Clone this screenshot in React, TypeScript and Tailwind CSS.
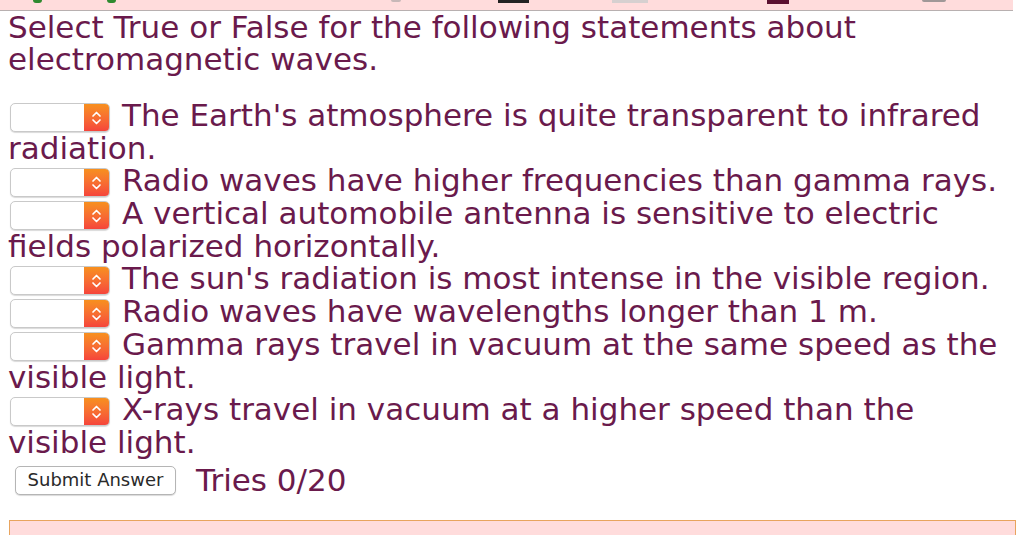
import React from "react";

const statements: string[][] = [
  ["The Earth's atmosphere is quite transparent to infrared", "radiation."],
  ["Radio waves have higher frequencies than gamma rays."],
  ["A vertical automobile antenna is sensitive to electric", "fields polarized horizontally."],
  ["The sun's radiation is most intense in the visible region."],
  ["Radio waves have wavelengths longer than 1 m."],
  ["Gamma rays travel in vacuum at the same speed as the", "visible light."],
  ["X-rays travel in vacuum at a higher speed than the", "visible light."],
];

function FakeSelect() {
  return (
    <span className="inline-flex align-top mt-[4px] ml-[2px] mr-[12px] h-[29px] w-[100px] rounded-[5px] border border-[#c9c9c9] bg-white shadow-[0_1px_1px_rgba(0,0,0,0.15)] overflow-hidden">
      <span className="flex-1" />
      <span className="w-[25px] h-full flex items-center justify-center bg-gradient-to-b from-[#f7901e] to-[#f5443b]">
        <svg width="11" height="18" viewBox="0 0 11 18" fill="none" stroke="white" strokeWidth="1.7" strokeLinecap="round" strokeLinejoin="round">
          <path d="M2 7 L5.5 3.5 L9 7" />
          <path d="M2 11 L5.5 14.5 L9 11" />
        </svg>
      </span>
    </span>
  );
}

// cropped toolbar icons peeking in at the top edge
function TopStrip() {
  return (
    <div className="flex items-start h-[11px] w-[1013px] bg-[#ffdcdc] border-b border-[#b8b0b0] overflow-hidden">
      <div className="ml-[33px] w-[9px] h-[3px] bg-[#2f8a2f] rounded-b-full" />
      <div className="ml-[65px] w-[9px] h-[3px] bg-[#2f8a2f] rounded-b-full" />
      <div className="ml-[275px] w-[10px] h-[2px] bg-[#c8b8b8] rounded-b-full" />
      <div className="ml-[97px] w-[31px] h-[3px] bg-[#222]" />
      <div className="ml-[83px] w-[36px] h-[3px] bg-[#d6d0d0]" />
      <div className="ml-[119px] w-[22px] h-[4px] bg-[#5a1030]" />
      <div className="ml-[133px] w-[24px] h-[2px] bg-[#a09898] rounded-b-full" />
    </div>
  );
}

export default function App() {
  return (
    <div
      className="w-[1024px] h-[535px] bg-white overflow-hidden text-[#6a1a4c]"
      style={{ fontFamily: '"DejaVu Sans", Verdana, sans-serif' }}
    >
      <TopStrip />
      <div className="px-[8px] text-[31px]">
        {/* Question */}
        <div className="leading-[32px] whitespace-nowrap">
          <div>Select True or False for the following statements about</div>
          <div>electromagnetic waves.</div>
        </div>

        {/* Statements */}
        <div className="mt-[24px] leading-[32.7px] whitespace-nowrap">
          {statements.map((lines, i) => (
            <React.Fragment key={i}>
              <div className="h-[32.7px]">
                <FakeSelect />
                {lines[0]}
              </div>
              {lines[1] && <div className="h-[32.7px]">{lines[1]}</div>}
            </React.Fragment>
          ))}
        </div>

        {/* Submit row */}
        <div className="mt-[5px] flex items-center h-[33px]">
          <button className="ml-[7px] h-[29px] w-[161px] rounded-[5px] border border-[#b5b5b5] bg-white shadow-[0_1px_1px_rgba(0,0,0,0.15)] text-[18px] text-[#2a2a2a] leading-none">
            Submit Answer
          </button>
          <span className="ml-[20px] leading-[33px]">Tries 0/20</span>
        </div>

        {/* Feedback box */}
        <div className="mt-[23px] ml-[1px] w-[1007px] h-[40px] border border-[#e8a45e] bg-[#ffdcdc]" />
      </div>
    </div>
  );
}
